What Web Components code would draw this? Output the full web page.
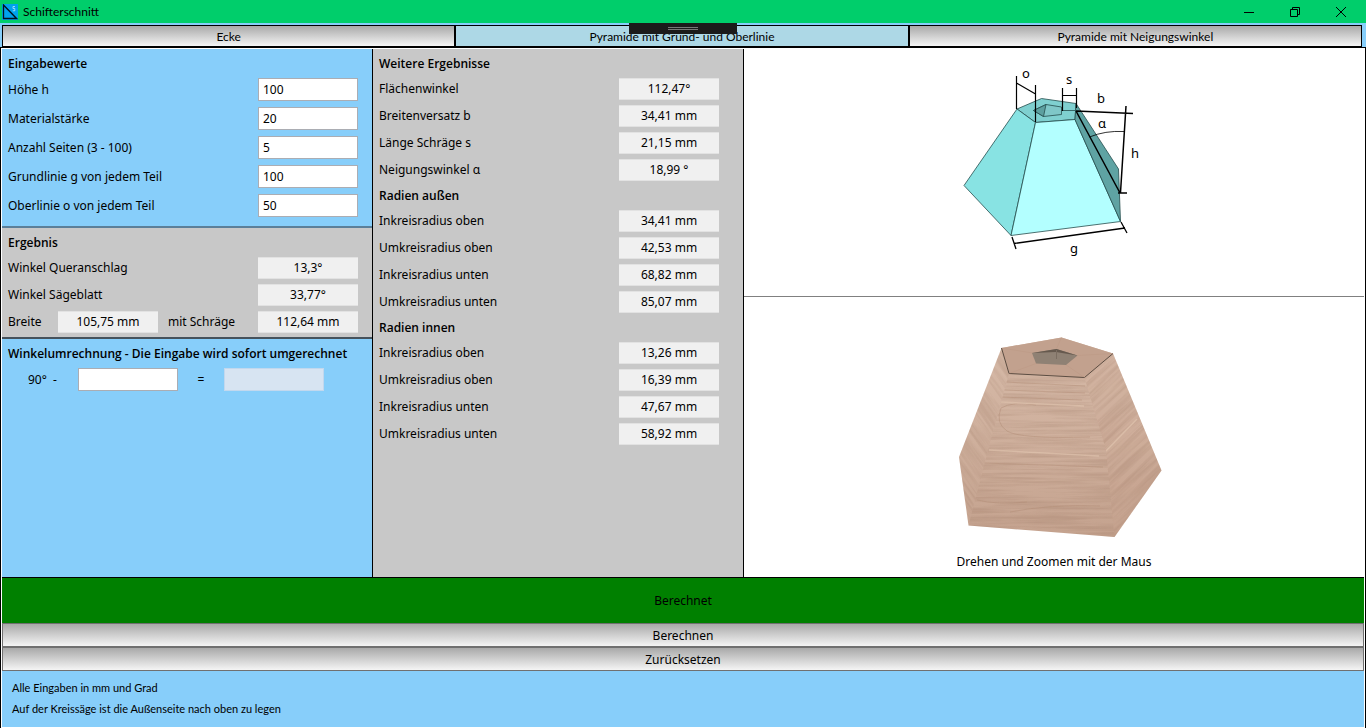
<!DOCTYPE html>
<html lang="de">
<head>
<meta charset="utf-8">
<title>Schifterschnitt</title>
<style>
html,body{margin:0;padding:0}
body{font-family:"Noto Sans","Open Sans",sans-serif;font-size:12px;line-height:16px;color:#000;background:#87cefa}
</style>
</head>
<body>
<schifter-app></schifter-app>
<script>
const define = (name, html) => customElements.define(name, class extends HTMLElement {
  connectedCallback() {
    if (this.shadowRoot) return;
    const t = document.createElement('template');
    t.innerHTML = typeof html === 'function' ? html(this) : html;
    this.attachShadow({ mode: 'open' }).append(t.content.cloneNode(true));
  }
});

define('title-bar', `
<style>
:host{display:flex;align-items:center;height:23px;padding-right:2px;background:#00ce6b}
.logo{margin:0 5px 0 2px}
h1{margin:0;flex:1;font-size:12px;font-weight:400;font-family:Lato,sans-serif}
button{width:46px;height:23px;border:0;padding:0;background:none;display:flex;align-items:center;justify-content:center}
svg{display:block}
</style>
<svg class="logo" width="16" height="16" viewBox="0 0 16 16"><rect width="16" height="16" fill="#00a2ed"/><path d="M1.5 1v13.500H14.500Z" fill="none" stroke="#03101c" stroke-width="1.300"/><path d="M13 2.500h-2v2h1.800v2.300H10.700" fill="none" stroke="#b8e6ff" stroke-width=".8"/></svg>
<h1><slot></slot></h1>
<button aria-label="Minimieren"><svg width="10" height="10"><path d="M0 5.500h10" stroke="#000"/></svg></button>
<button aria-label="Wiederherstellen"><svg width="10" height="10" fill="none" stroke="#000"><path d="M.5 2.500h7v7h-7zM2.500 2.500V.5h7v7h-2"/></svg></button>
<button aria-label="Schließen"><svg width="10" height="10"><path d="M0 0l10 10M10 0L0 10" stroke="#000"/></svg></button>`);

define('mode-tabs', `
<style>
:host{display:grid;grid-template-columns:repeat(3,1fr);padding:2px 4px 0 2px;position:relative}
.grip{position:absolute;left:50%;top:0;width:108px;height:11px;margin-left:-54px;background:#1b1b1b;display:flex;flex-direction:column;align-items:center;justify-content:center;gap:1px}
.grip i{width:30px;height:1px;background:#777}
</style>
<slot></slot><div class="grip"><i></i><i></i></div>`);

define('mode-tab', `
<style>
:host{display:block;font-family:Lato,sans-serif}
button{display:block;width:100%;height:22px;border:1px solid #000;padding:2px 0 0;font:inherit;color:inherit;background:linear-gradient(#a9a9a9,#f5f5f5)}
:host([active]) button{background:#add8e6}
</style><button><slot></slot></button>`);

define('panel-section', el => `
<style>
:host{display:block;padding:2px 0 0 6px}
:host([tone=grey]){background:#c8c8c8}
h2{margin:0;padding-top:1px;font-family:"Open Sans",sans-serif;font-size:12px;line-height:23px;font-weight:600;white-space:nowrap}
</style><h2>${el.getAttribute('heading')}</h2><slot></slot>`);

define('input-row', el => `
<style>
:host{display:flex;align-items:center;justify-content:space-between;height:29px;padding-right:14px}
input{box-sizing:border-box;width:100px;height:23px;border:1px solid #abadb3;padding:0 4px;font:inherit;background:#fff}
</style><label for="v">${el.getAttribute('label')}</label><input id="v" value="${el.getAttribute('value')}">`);

define('value-box', `
<style>
:host{display:block;box-sizing:border-box;width:100px;height:22px;background:#f0f0f0;border:1px solid #e2e2e2;border-width:1px 0;text-align:center;line-height:20px}
output{display:block}
</style><output><slot></slot></output>`);

define('value-row', el => `
<style>
:host{display:flex;align-items:center;justify-content:space-between;height:27px;padding-right:24px}
:host([narrow]){padding-right:14px}
</style><span>${el.getAttribute('label')}</span><value-box>${el.getAttribute('value')}</value-box>`);

define('width-row', `
<style>
:host{display:flex;align-items:center;height:27px;padding-right:14px}
.a{width:50px}.b{flex:1;padding-left:10px}
</style><span class="a">Breite</span><value-box>105,75 mm</value-box><span class="b">mit Schräge</span><value-box>112,64 mm</value-box>`);

define('angle-converter', `
<style>
:host{display:flex;align-items:center;height:29px;padding-left:20px}
label{width:50px;white-space:pre}
input{box-sizing:border-box;width:100px;height:23px;border:1px solid #abadb3;padding:0 4px;font:inherit;background:#fff}
input:disabled{background:#d7e4f2;border-color:#c2d8ee}
span{width:46px;text-align:center}
</style><label for="a">90°  -</label><input id="a"><span>=</span><input disabled aria-label="Ergebnis der Umrechnung">`);

define('pyramid-diagram', `
<style>
:host{display:block}svg{display:block}text{font-size:13px}
</style>
<svg width="228" height="210" viewBox="940 60 228 210" stroke-linejoin="round">
<g stroke="#244c4c" stroke-width=".8">
<path d="M1017 109 1041.500 98.500 1076 103.500 1075 119.500 1035.500 122.500Z" fill="#7fd0d0"/>
<path d="M1017 109 1035.500 122.500 1011 235.500 964 185.500Z" fill="#88e3e3"/>
<path d="M1035.500 122.500 1075 119.500 1120.500 221.500 1011 235.500Z" fill="#b3ffff"/>
<path d="M1076 103.500 1118.500 169 1120.500 221.500 1075 119.500Z" fill="#5fa3a3"/>
<path d="M1033.500 110.500 1046 104.500 1061.500 107V114.500L1043.500 116.500Z" fill="#7fc7c8"/>
<path d="M1033.500 110.500 1046 104.500 1043.500 116.500Z" fill="#5da0a0"/>
<path d="M1061.500 110.500H1075" fill="none"/>
</g>
<g fill="none" stroke="#000" stroke-width="1.200">
<path d="M1016.500 76v33M1035.500 85v37M1016.500 83l19 11M1062.500 88v23M1076.500 88v20M1062.500 95.500h14"/>
<path d="M1076 111 1133 113.500M1126 106l-5.500 86.500M1118 193h9M1076 111l44 82" stroke-width="1.500"/>
<path d="M1089.500 137Q1105 130.500 1124 131.500" stroke-width=".8"/>
<path d="M1012 237l4 12M1121 222l6 11M1014 243.500l111-15.500" stroke-width="1.300"/>
</g>
<text x="1022" y="78">o</text><text x="1066" y="84">s</text><text x="1097" y="103">b</text><text x="1098" y="128">α</text><text x="1131" y="158">h</text><text x="1070" y="253">g</text>
</svg>`);

define('pyramid-model', `
<style>
:host{display:block}svg{display:block}
</style>
<svg width="228" height="220" viewBox="940 320 228 220">
<defs>
<filter id="grain" x="0" y="0" width="1" height="1" color-interpolation-filters="sRGB"><feTurbulence type="fractalNoise" baseFrequency=".012 .3" numOctaves="5" seed="8"/><feColorMatrix values="0 0 0 0 .56  0 0 0 0 .42  0 0 0 0 .34  2.500 0 0 0 -.9"/></filter>
<clipPath id="front"><path d="M1009 373.500 1084.500 377.500 1106 450 1114.500 537 968.500 525.500 988 450Z"/></clipPath>
<clipPath id="left"><path d="M1001.500 348 1009 373.500 988 450 968.500 525.500 959 457Z"/></clipPath>
<clipPath id="right"><path d="M1113 353.500 1161.500 470.500 1114.500 537 1106 450 1084.500 377.500Z"/></clipPath>
<linearGradient id="wood" x1="0" y1="0" x2="0" y2="1"><stop offset="0" stop-color="#d6baa8"/><stop offset=".5" stop-color="#cfb09d"/><stop offset="1" stop-color="#c4a28e"/></linearGradient>
</defs>
<path d="M1001.500 348 1061.500 337.500 1113 353.500 1161.500 470.500 1114.500 537 968.500 525.500 959 457Z" fill="url(#wood)"/>
<g clip-path="url(#front)"><rect x="940" y="360" width="228" height="180" filter="url(#grain)" opacity=".2"/>
<g fill="none" stroke="#b08b75" opacity=".45"><path d="M1001 408Q1013 401 1036 405M1001 408Q995 423 1007 431T1090 437M1005 382l80 4M1003 390l82 3M1000 397l82 3M983 463l120 4M977 500q20 5 50 2M1010 512q40-8 90-6"/><path d="M989 450l110 6M1000 402l84 4" stroke="#ead0ba" stroke-width="1.500"/></g></g>
<g clip-path="url(#left)"><rect x="840" y="360" width="300" height="200" filter="url(#grain)" opacity=".18" transform="rotate(55 980 430)"/></g>
<g clip-path="url(#right)"><path d="M1080 340h90v210h-90z" fill="#c9a08a" opacity=".15"/><rect x="1000" y="340" width="250" height="210" filter="url(#grain)" opacity=".2" transform="rotate(-43 1120 440)"/><path d="M1101 456l36-37" stroke="#ead0ba" stroke-width="1.500" opacity=".5"/></g>
<path d="M1001.500 348 1061.500 337.500 1113 353.500 1084.500 377.500 1009 373.500Z" fill="#c2a18e"/>
<path d="M1001.500 348 1009 373.500 1084.500 377.500 1113 353.500" fill="none" stroke="#5c4d42"/>
<path d="M1001.500 348l31 5M1061.500 337.500l-5 11M1113 353.500l-36 2M1084.500 377.500l-19-13M1009 373.500l27-10" stroke="#b8937e" opacity=".3"/>
<path d="M1032 353 1056.500 349 1077.500 355.500 1066 365 1036 363.500Z" fill="#8f8174"/>
<path d="M1032 353 1056.500 349 1077.500 355.500 1056 352Z" fill="#66594e"/><path d="M1056.500 350v9" stroke="#7b6d61"/>
</svg>`);

define('action-button', `
<style>
:host{display:block}
button{display:block;width:100%;height:24px;border:1px solid #707070;padding:2px 0 0;font:inherit;color:inherit;background:linear-gradient(#a9a9a9,#f5f5f5)}
</style><button><slot></slot></button>`);

define('schifter-app', `
<style>
:host{display:flex;flex-direction:column;min-height:100vh}
main{flex:1;display:flex;flex-direction:column;border:1px solid #000;padding:1px;background:linear-gradient(#87cefa,#87cefa) content-box,#fff}
.cols{display:grid;grid-template-columns:370px 370px 1fr;column-gap:1px;background:#000;border-bottom:1px solid #000;flex:1}
.left{background:#87cefa}
.first{padding-bottom:6px;border-bottom:2px solid #5b7f99}
.result{padding-bottom:2px;border-bottom:2px solid #46525c}
.more{background:#c8c8c8}
.more panel-section+panel-section{padding-top:0}
.right{background:#fff;display:flex;flex-direction:column;align-items:center}
.draw{align-self:stretch;display:flex;justify-content:center;padding:11px 0 26px;border-bottom:1px solid #808080}
pyramid-model{margin-top:23px}
p{margin:0}
.right p{margin:14px 0 7px}
.status{background:#008000;height:45px;display:flex;align-items:center;justify-content:center}
footer{padding:6px 10px 8px;font-family:Lato,sans-serif;font-size:11px;line-height:21px}
</style>
<title-bar>Schifterschnitt</title-bar>
<mode-tabs><mode-tab>Ecke</mode-tab><mode-tab active>Pyramide mit Grund- und Oberlinie</mode-tab><mode-tab>Pyramide mit Neigungswinkel</mode-tab></mode-tabs>
<main>
<div class="cols">
<div class="left">
<panel-section class="first" heading="Eingabewerte">
<input-row label="Höhe h" value="100"></input-row><input-row label="Materialstärke" value="20"></input-row><input-row label="Anzahl Seiten (3 - 100)" value="5"></input-row><input-row label="Grundlinie g von jedem Teil" value="100"></input-row><input-row label="Oberlinie o von jedem Teil" value="50"></input-row>
</panel-section>
<panel-section class="result" tone="grey" heading="Ergebnis">
<value-row narrow label="Winkel Queranschlag" value="13,3°"></value-row><value-row narrow label="Winkel Sägeblatt" value="33,77°"></value-row><width-row></width-row>
</panel-section>
<panel-section heading="Winkelumrechnung - Die Eingabe wird sofort umgerechnet"><angle-converter></angle-converter></panel-section>
</div>
<div class="more">
<panel-section heading="Weitere Ergebnisse"><value-row label="Flächenwinkel" value="112,47°"></value-row><value-row label="Breitenversatz b" value="34,41 mm"></value-row><value-row label="Länge Schräge s" value="21,15 mm"></value-row><value-row label="Neigungswinkel α" value="18,99 °"></value-row></panel-section>
<panel-section heading="Radien außen"><value-row label="Inkreisradius oben" value="34,41 mm"></value-row><value-row label="Umkreisradius oben" value="42,53 mm"></value-row><value-row label="Inkreisradius unten" value="68,82 mm"></value-row><value-row label="Umkreisradius unten" value="85,07 mm"></value-row></panel-section>
<panel-section heading="Radien innen"><value-row label="Inkreisradius oben" value="13,26 mm"></value-row><value-row label="Umkreisradius oben" value="16,39 mm"></value-row><value-row label="Inkreisradius unten" value="47,67 mm"></value-row><value-row label="Umkreisradius unten" value="58,92 mm"></value-row></panel-section>
</div>
<div class="right"><div class="draw"><pyramid-diagram></pyramid-diagram></div><pyramid-model></pyramid-model><p>Drehen und Zoomen mit der Maus</p></div>
</div>
<div class="status" role="status">Berechnet</div>
<action-button>Berechnen</action-button><action-button>Zurücksetzen</action-button>
<footer><p>Alle Eingaben in mm und Grad</p><p>Auf der Kreissäge ist die Außenseite nach oben zu legen</p></footer>
</main>`);
</script>
</body>
</html>
